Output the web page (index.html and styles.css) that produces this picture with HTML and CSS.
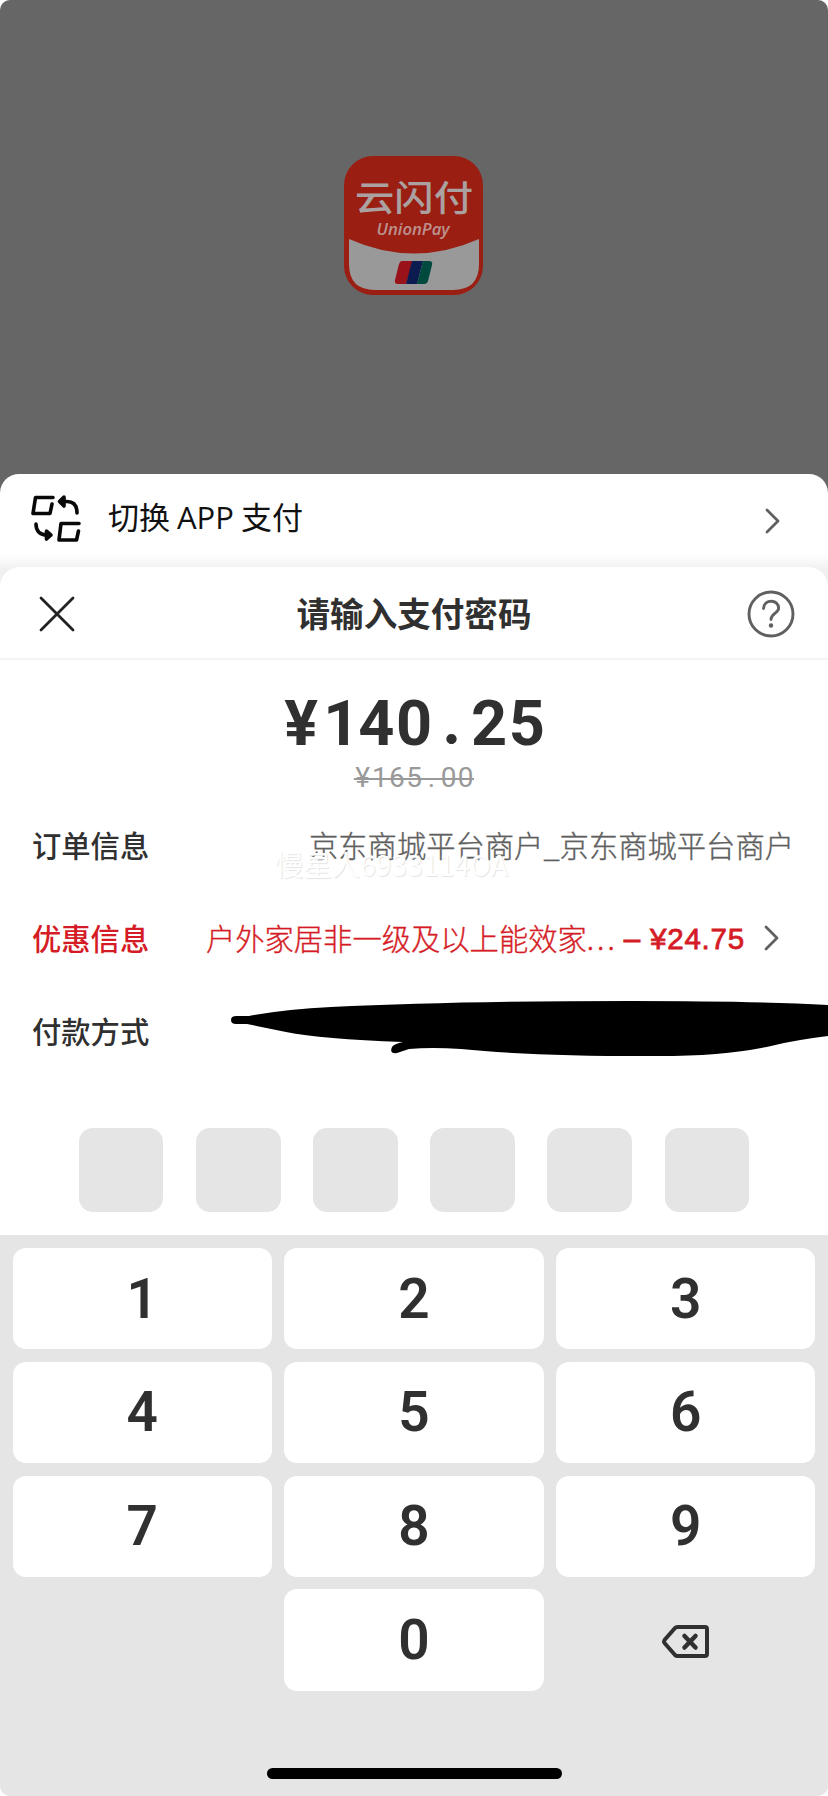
FILE: index.html
```html
<!DOCTYPE html>
<html lang="zh-CN">
<head>
<meta charset="utf-8">
<title>云闪付</title>
<link rel="stylesheet" href="styles.css">
</head>
<body>
<div class="phone">
  <header class="backdrop">
    <svg class="logo" viewBox="0 0 139 139">
      <rect width="139" height="139" rx="29" fill="#9a1e12"/>
      <path d="M5 83Q70 112 135 83V108Q135 134 109 134H31Q5 134 5 108Z" fill="#999"/>
      <text class="logo-cn" x="70" y="55" textLength="118" lengthAdjust="spacingAndGlyphs">云闪付</text>
      <text class="logo-en" x="69" y="79" textLength="73" lengthAdjust="spacingAndGlyphs">UnionPay</text>
      <path d="M58 105H69L62 128H54Q50 128 51 124L55 108Q56 105 58 105Z" fill="#991119"/>
      <path d="M68 105H79L73 128H62Z" fill="#0d1c50"/>
      <path d="M79 105H85Q89 105 88 109L84 125Q83 128 80 128H73Z" fill="#00493f"/>
    </svg>
  </header>

  <section class="switch">
    <svg class="switch-icon" viewBox="0 0 50 48" fill="none" stroke="#080808" stroke-width="3.6" stroke-linecap="round" stroke-linejoin="round">
      <path d="M22 3.500H4.500L2 19.500H19L21 10"/>
      <path d="M48 29.500H30L28 46H45.500L47.500 37"/>
      <path d="M33 7.500H36C43 7.500 46 12 46 19"/>
      <path d="M5 30C5 37 9 41 16 41"/>
      <path d="M33 3L28.500 7.500L33 12Z" fill="#080808"/>
      <path d="M15.500 37L20 41L15.500 45Z" fill="#080808"/>
    </svg>
    <span class="switch-text">切换<span class="app">APP</span>支付</span>
    <svg class="chevron" viewBox="0 0 16 26"><path d="M2 2L13 13L2 24"/></svg>
  </section>

  <main class="sheet">
    <div class="head">
      <svg class="close" viewBox="0 0 36 36"><path d="M2 2L34 34M34 2L2 34"/></svg>
      <h1 class="title">请输入支付密码</h1>
      <svg class="help" viewBox="0 0 48 48" fill="none" stroke="#606060" stroke-width="2.900" stroke-linecap="round">
        <circle cx="24" cy="24" r="22"/>
        <path d="M16.500 18.500C17 8.500 32 9 31.600 18.500C31.400 23 24 23.500 24 29.500"/>
        <circle cx="24" cy="35.500" r="2.200" fill="#606060" stroke="none"/>
      </svg>
    </div>

    <div class="amount"><span class="yen">¥</span><span class="one">1</span><span>4</span><span>0</span><span class="point">.</span><span>2</span><span>5</span></div>
    <div class="was"><span>¥</span><span>1</span><span>6</span><span>5</span><span>.</span><span>0</span><span>0</span></div>

    <div class="rows">
      <div class="row">
        <span class="label">订单信息</span>
        <span class="value">京东商城平台商户_京东商城平台商户</span>
        <span class="watermark">慢星人6933114OA</span>
      </div>
      <div class="row promo">
        <span class="label">优惠信息</span>
        <span class="value">户外家居非一级及以上能效家<span class="dots">...</span></span>
        <span class="cut">– ¥24.75</span>
        <svg class="chevron" viewBox="0 0 16 26"><path d="M2 2L13 13L2 24"/></svg>
      </div>
      <div class="row">
        <span class="label">付款方式</span>
        <svg class="scribble" viewBox="0 0 598 58">
          <path d="M18 15Q55 8 100 6Q230 0 400 0Q520 0 598 4V35Q565 39 540 45Q490 56 415 55Q300 55 230 48Q200 46 178 48L166 52Q158 53 161 46Q163 43 172 41Q90 38 55 31L16 23H5Q0 23 0 19Q0 15 5 15Z"/>
        </svg>
      </div>
    </div>

    <div class="pin"><i></i><i></i><i></i><i></i><i></i><i></i></div>
  </main>

  <div class="keypad">
    <div class="key">1</div><div class="key">2</div><div class="key">3</div>
    <div class="key">4</div><div class="key">5</div><div class="key">6</div>
    <div class="key">7</div><div class="key">8</div><div class="key">9</div>
    <div class="key blank"></div><div class="key">0</div>
    <div class="key blank">
      <svg class="delete" viewBox="0 0 50 36" fill="none" stroke="#303030" stroke-width="4" stroke-linejoin="round" stroke-linecap="round">
        <path d="M16.500 3H44Q46 3 46 5V30Q46 32 44 32H16.500Q15 32 14 31L3.500 19Q2.500 17.500 3.500 16L14 4Q15 3 16.500 3Z"/>
        <path d="M23.500 12L34.500 23.500M34.500 12L23.500 23.500" stroke-width="4.500"/>
      </svg>
    </div>
  </div>
  <div class="home"></div>
</div>
</body>
</html>
```
FILE: styles.css
```css
* { box-sizing: border-box; }
body {
  margin: 0;
  background: #fff;
  font-family: "Noto Sans CJK SC", sans-serif;
  color: #303030;
}
.phone {
  width: 828px;
  height: 1796px;
  display: flex;
  flex-direction: column;
  border-radius: 10px;
  overflow: hidden;
  background: #e5e5e5;
}
.backdrop {
  height: 494px;
  flex: none;
  margin-bottom: -20px;
  padding: 156px 2px 0 0;
  background: #666;
  display: flex;
  justify-content: center;
  align-items: flex-start;
}
.logo { width: 139px; height: 139px; }
.logo-cn {
  font-size: 35px;
  font-weight: 500;
  fill: #aaa1a0;
  text-anchor: middle;
}
.logo-en {
  font: italic 600 16px "Open Sans", sans-serif;
  fill: #bd928e;
  text-anchor: middle;
}
.switch {
  height: 113px;
  flex: none;
  margin-bottom: -20px;
  padding: 0 47px 20px 31px;
  display: flex;
  align-items: center;
  border-radius: 19px 19px 0 0;
  background: linear-gradient(#fff 80px, #f0f0f0 96px);
}
.switch-icon { width: 50px; height: 48px; margin-top: -6px; }
.switch-text {
  margin: -9px auto 0 27px;
  font-size: 31px;
  line-height: 44px;
  color: #111;
  white-space: nowrap;
}
.app { margin: 0 7px; font-family: "Open Sans", sans-serif; }
.chevron {
  width: 16px;
  height: 26px;
  flex: none;
  fill: none;
  stroke: #606060;
  stroke-width: 2.8;
  stroke-linecap: round;
  stroke-linejoin: round;
}
.sheet {
  height: 668px;
  flex: none;
  border-radius: 20px 20px 0 0;
  background: #fff;
}
.head {
  height: 93px;
  padding: 0 33px 0 39px;
  display: flex;
  align-items: center;
  justify-content: space-between;
  border-bottom: 2px solid #f4f4f4;
}
.close {
  width: 36px;
  height: 36px;
  margin-top: 2px;
  fill: none;
  stroke: #222;
  stroke-width: 2.8;
  stroke-linecap: round;
}
.title {
  margin: 0 0 0 6px;
  font-size: 33.6px;
  line-height: 48px;
  font-weight: 700;
}
.help { width: 48px; height: 48px; margin-top: 2px; }
.amount {
  height: 79px;
  padding-top: 24px;
  display: flex;
  justify-content: center;
  font: 700 63px/79px Roboto, sans-serif;
}
.amount span { width: 37.6px; display: flex; justify-content: center; }
.amount .one { padding-left: 5px; }
.amount .point { margin-top: -4px; font-family: Lato, sans-serif; font-weight: 900; }
.was {
  width: 120px;
  height: 34px;
  margin: 22px auto 0;
  display: flex;
  font: 400 28px/34px Roboto, sans-serif;
  color: #999;
  background: linear-gradient(#999, #999) center 17px / 100% 2px no-repeat;
}
.was span { width: 17.2px; flex: none; text-align: center; }
.rows { padding: 3px 34px 0 32px; }
.row {
  position: relative;
  height: 93px;
  display: flex;
  align-items: center;
  font-size: 29.3px;
  line-height: 44px;
  white-space: nowrap;
}
.label { margin-top: -2px; font-weight: 500; }
.value {
  margin: -2px 0 0 auto;
  color: #606060;
  font-weight: 300;
  -webkit-text-stroke: .35px currentColor;
}
.watermark {
  position: absolute;
  left: 243px;
  top: 44px;
  font-size: 28.3px;
  color: #fff;
  text-shadow: 1px 1px 1px #e4e4e4;
}
.promo { padding-right: 14px; color: #d51c26; }
.promo .value { color: #d51c26; }
.dots { letter-spacing: 3px; }
.cut {
  margin: 2px 19px 0 6px;
  font: 500 29.5px/44px "Liberation Sans", sans-serif;
  letter-spacing: .8px;
  -webkit-text-stroke: .8px #d51c26;
}
.scribble {
  position: absolute;
  left: 199px;
  top: 17px;
  width: 598px;
  height: 58px;
}
.pin {
  margin: 51px 79px 0;
  display: flex;
  justify-content: space-between;
}
.pin i { width: 84.4px; height: 84px; border-radius: 14px; background: #e5e5e5; }
.keypad {
  flex: none;
  padding: 13px 12.5px 0;
  display: grid;
  grid-template-columns: repeat(3, 1fr);
  grid-auto-rows: 101.2px;
  gap: 12.6px 12px;
}
.key {
  display: flex;
  align-items: center;
  justify-content: center;
  border-radius: 13px;
  background: #fff;
  font: 600 55px/64px Roboto, sans-serif;
}
.blank { background: none; }
.delete { width: 50px; height: 36px; margin-top: 4px; }
.home {
  width: 295px;
  height: 11px;
  margin: auto auto 17px;
  border-radius: 6px;
  background: #000;
}
```
